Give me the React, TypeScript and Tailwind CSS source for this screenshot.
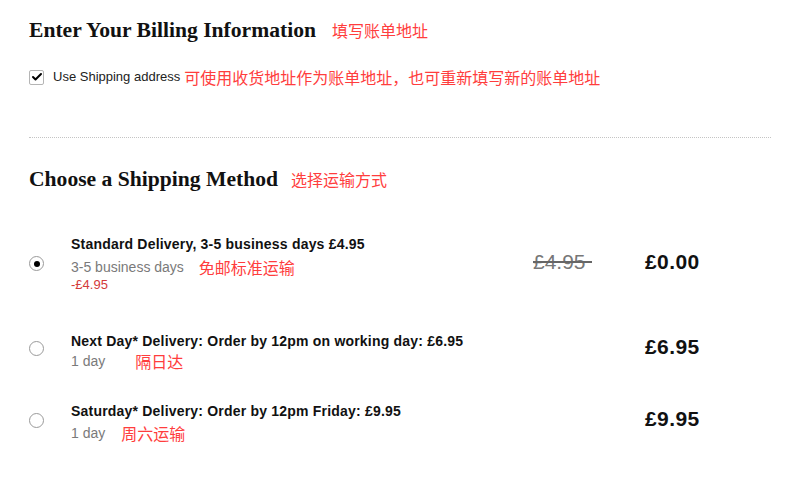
import { Check } from 'lucide-react'

type Method = {
  id: string
  title: string
  sub: string
  note: string
  noteGap: string
  discount?: string
  was?: string
  price: string
  selected?: boolean
  mt: string
  subMt: string
  radioMt: string
  priceMt: string
}

const methods: Method[] = [
  {
    id: 'std',
    title: 'Standard Delivery, 3-5 business days £4.95',
    sub: '3-5 business days',
    note: '免邮标准运输',
    noteGap: 'ml-[15px]',
    discount: '-£4.95',
    was: '£4.95',
    price: '£0.00',
    selected: true,
    mt: 'mt-[42px]',
    subMt: 'mt-[5px]',
    radioMt: 'mt-[20px]',
    priceMt: 'mt-[12px]',
  },
  {
    id: 'next',
    title: 'Next Day* Delivery: Order by 12pm on working day: £6.95',
    sub: '1 day',
    note: '隔日达',
    noteGap: 'ml-[30px]',
    price: '£6.95',
    mt: 'mt-[40px]',
    subMt: 'mt-[2px]',
    radioMt: 'mt-[8px]',
    priceMt: 'mt-0',
  },
  {
    id: 'sat',
    title: 'Saturday* Delivery: Order by 12pm Friday: £9.95',
    sub: '1 day',
    note: '周六运输',
    noteGap: 'ml-[16px]',
    price: '£9.95',
    mt: 'mt-[32px]',
    subMt: 'mt-[4px]',
    radioMt: 'mt-[10px]',
    priceMt: 'mt-[2px]',
  },
]

const serif = "font-['Liberation_Serif',serif]"
const sans = "font-['Liberation_Sans',Arial,sans-serif]"
const cjk = "font-['Noto_Sans_CJK_SC',sans-serif]"

function Radio({ on }: { on?: boolean }) {
  return (
    <span className="flex h-[15px] w-[15px] items-center justify-center rounded-full border border-[#9a9a9a] bg-white">
      {on && <span className="h-[6px] w-[6px] rounded-full bg-black" />}
    </span>
  )
}

export default function App() {
  return (
    <div className={`min-h-[481px] w-[800px] bg-white px-[29px] pt-[15px] ${sans}`}>
      <div className="flex items-center h-[30px]">
        <h2 className={`${serif} text-[21.6px] font-bold text-[#111]`}>Enter Your Billing Information</h2>
        <span className={`${cjk} ml-[16px] text-[16px] text-[#ff3d3d]`}>填写账单地址</span>
      </div>

      <label className="mt-[22px] flex h-[20px] items-center">
        <span className="flex h-[15px] w-[15px] items-center justify-center rounded-[2px] border border-[#b5b5b5] bg-white">
          <Check size={12} strokeWidth={4} className="text-black" />
        </span>
        <span className="ml-[9px] text-[13px] text-[#222]">Use Shipping address</span>
        <span className={`${cjk} ml-[4px] text-[16px] text-[#ff3d3d]`}>
          可使用收货地址作为账单地址，也可重新填写新的账单地址
        </span>
      </label>

      <div className="mt-[50px] border-t border-dotted border-[#c4c4c4]" />

      <div className="mt-[26px] flex h-[30px] items-center">
        <h2 className={`${serif} text-[21.6px] font-bold text-[#111]`}>Choose a Shipping Method</h2>
        <span className={`${cjk} ml-[13px] text-[16px] text-[#ff3d3d]`}>选择运输方式</span>
      </div>

      {methods.map(m => (
        <div key={m.id} className={`${m.mt} flex items-start`}>
          <div className={`w-[42px] ${m.radioMt}`}>
            <Radio on={m.selected} />
          </div>
          <div className="w-[462px]">
            <div className="h-[16px] text-[14px] leading-[16px] font-bold tracking-[0.2px] whitespace-nowrap text-[#111]">
              {m.title}
            </div>
            <div className={`${m.subMt} flex h-[20px] items-center`}>
              <span className="text-[14px] text-[#7a7a7a]">{m.sub}</span>
              <span className={`${cjk} ${m.noteGap} text-[16px] text-[#ff3d3d]`}>{m.note}</span>
            </div>
            {m.discount && (
              <div className="h-[16px] text-[13px] leading-[16px] text-[#d33a3a]">{m.discount}</div>
            )}
          </div>
          <div className={`w-[112px] ${m.priceMt}`}>
            {m.was && (
              <span className="relative inline-block text-[21px] leading-[28px] text-[#777]">
                {m.was}
                <span className="absolute left-0 right-[-6px] top-[13px] h-[2px] bg-[#666]" />
              </span>
            )}
          </div>
          <div className={`${m.priceMt} text-[21px] leading-[28px] font-bold tracking-[0.4px] text-[#111]`}>
            {m.price}
          </div>
        </div>
      ))}
    </div>
  )
}
